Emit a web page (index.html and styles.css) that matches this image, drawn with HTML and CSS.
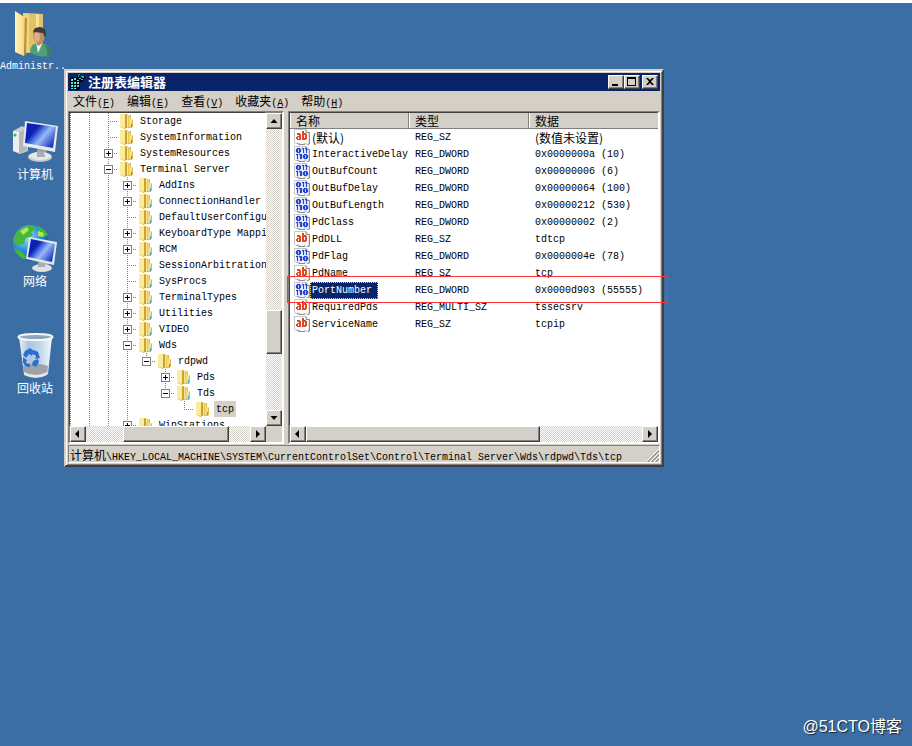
FILE: index.html
```html
<!DOCTYPE html>
<html lang="zh-CN">
<head>
<meta charset="utf-8">
<title>注册表编辑器</title>
<link rel="stylesheet" href="styles.css">
</head>
<body>
<svg class="defs" aria-hidden="true">
  <defs>
    <linearGradient id="gold" x1="0" x2="1"><stop offset="0" stop-color="#fff3a8"/><stop offset=".5" stop-color="#e6c95a"/><stop offset="1" stop-color="#f6e38a"/></linearGradient>
    <linearGradient id="cover" x1="0" x2="1"><stop offset="0" stop-color="#fff4bd"/><stop offset=".7" stop-color="#f7df8e"/><stop offset="1" stop-color="#dcb85a"/></linearGradient>
    <linearGradient id="screen" x1="0" y1="0" x2="1" y2=".7"><stop offset="0" stop-color="#0a1fc8"/><stop offset=".35" stop-color="#0d22b0"/><stop offset=".5" stop-color="#4a74e4"/><stop offset=".65" stop-color="#9ab8f6"/><stop offset="1" stop-color="#1c3cc0"/></linearGradient>
    <linearGradient id="glass" x1="0" x2="1"><stop offset="0" stop-color="#e8f1fa"/><stop offset=".3" stop-color="#a9c5e2"/><stop offset=".7" stop-color="#c8dbee"/><stop offset="1" stop-color="#f4f8fc"/></linearGradient>
    <radialGradient id="globe" cx=".35" cy=".3" r=".8"><stop offset="0" stop-color="#a9ecff"/><stop offset=".5" stop-color="#2b8fdd"/><stop offset="1" stop-color="#0a3f97"/></radialGradient>
    <symbol id="folder" viewBox="0 0 18 16">
      <path d="M2 1h7l1 1h3v4h1l1 1v7l-2 1H8l-1 1-5-2z" fill="#d9b94a"/>
      <path d="M2 1h5v14l-5-1z" fill="#fbeb9c"/>
      <path d="M7 2h2v13H7z" fill="#c9a23a"/>
      <path d="M9 2h3v12l-3 1z" fill="url(#gold)"/>
      <path d="M12 6h2v7l-2 1z" fill="#f5e07c"/>
      <path d="M13 11h1v3h-1z" fill="#3aa6d8"/>
    </symbol>
    <symbol id="page" viewBox="0 0 16 16">
      <path d="M.5 .5h11.500l3 3v11l-2 1-2-1.500-2 1.500H7l-2-1.500-3 .5-1.500-1z" fill="#fff" stroke="#c6c6c6"/>
      <path d="M12 .5v3h3.500M15.500 3.500v11.500l-2 .5M3 14l2 1.500h6" fill="none" stroke="#8b8b8b"/>
    </symbol>
    <symbol id="sz" viewBox="0 0 16 16">
      <use href="#page"/>
      <path d="M3 4h3v1h1v6H3v-1H2V8h1V7h2V6H3zM4 8v2h1V8zM8 2h2v2h2v1h1v5h-1v1H8zM10 6v3h1V6z" fill="#dc4a26" fill-rule="evenodd"/>
    </symbol>
    <symbol id="dword" viewBox="0 0 16 16">
      <use href="#page"/>
      <path d="M3 2h3v1h1v3H6v1H3V6H2V3h1zM4 3v3h1V3zM8 2h2v5H9V3H8zM11 2h2v5h-1V3h-1zM2 8h2v5H3V9H2zM5 8h3v5H6V9H5zM10 8h3v1h1v3h-1v1h-3v-1H9V9h1zM11 9v3h1V9z" fill="#2447d6" stroke="#2447d6" stroke-width=".3" fill-rule="evenodd"/>
    </symbol>
  </defs>
</svg>

<main class="desktop">
  <nav class="shortcuts" aria-label="桌面">
    <a class="shortcut" href="#">
      <svg viewBox="0 0 48 48" aria-hidden="true">
        <path d="M12 2l20 1v38l-18 1z" fill="#efd580"/>
        <path d="M18 3l14 0v30l-14 7z" fill="#e2c169"/>
        <path d="M25 3h3v36h-3z" fill="#f6e19a"/>
        <path d="M4 0l11 7-2 38-9-4z" fill="url(#cover)"/>
        <path d="M14 7h2l-1 36-2 2z" fill="#b98f3a"/>
        <path d="M19 42q0-9 7-10l5 1 4 0q5 3 6 11-9 4-22-2z" fill="#4f9f7b"/>
        <path d="M33 33q7 2 8 11l-5 1q1-7-3-12z" fill="#3b7f60"/>
        <path d="M25 31l2 11 4-9z" fill="#eef6f2"/>
        <path d="M24 29l3 6 5-3-1-5z" fill="#b9875a"/>
        <ellipse cx="28" cy="25" rx="6" ry="7" fill="#bf8f66"/>
        <ellipse cx="26" cy="26" rx="3" ry="5" fill="#dcb088"/>
        <path d="M22 22q0-6 7-6 6 1 6 7l-1 4-2-5-8-1z" fill="#3e3a38"/>
      </svg>
      <span class="mono">Administr..</span>
    </a>
    <a class="shortcut" href="#">
      <svg viewBox="0 0 48 48" aria-hidden="true">
        <path d="M2 13l9-5 6 3v22l-8 3-7-3z" fill="#c9ccd0"/>
        <path d="M2 13l6 1v21l-6-2z" fill="#eceef0"/>
        <path d="M8 14l8-3v21l-8 4z" fill="#b4b8bd"/>
        <circle cx="4" cy="17" r="1.500" fill="#24c33c"/>
        <path d="M26 31l9 1 1 6h-9z" fill="#9ca1a8"/>
        <ellipse cx="29" cy="39" rx="12" ry="5" fill="#c4c8cc"/>
        <ellipse cx="29" cy="38" rx="11" ry="4" fill="#e6e8ea"/>
        <path d="M26 33l7 1 1 5h-8z" fill="#a9aeb4"/>
        <path d="M14 3l33 5-3 26-32-6z" fill="#e8eaec"/>
        <path d="M16 5l29 4-3 21-28-5z" fill="url(#screen)"/>
      </svg>
      <span>计算机</span>
    </a>
    <a class="shortcut" href="#">
      <svg viewBox="0 0 48 48" aria-hidden="true">
        <circle cx="20" cy="18" r="18" fill="url(#globe)"/>
        <path d="M5 8Q11 1 21 0l4 4-5 3 2 4-7 2-2 6-7 1-4-4zM3 23l7 3 5 5-1 4Q5 31 3 23zM27 1q7 3 10 9l-4 2-5-4z" fill="#45b83b"/>
        <path d="M9 6l7-4 2 3-6 5zM27 6l6 2-1 4-5-1z" fill="#b7e45b"/>
        <path d="M28 36l9 1 1 4h-9z" fill="#9ca1a8"/>
        <ellipse cx="31" cy="43" rx="10" ry="4" fill="#dfe1e4"/>
        <path d="M27 37l7 1v4h-7z" fill="#a9aeb4"/>
        <path d="M18 12l28 5-3 23-28-6z" fill="#e2e5e9"/>
        <path d="M20 14l24 5-3 18-24-5z" fill="url(#screen)"/>
      </svg>
      <span>网络</span>
    </a>
    <a class="shortcut" href="#">
      <svg viewBox="0 0 48 48" aria-hidden="true">
        <path d="M8 5h33l-4 37q-12 6-24 0z" fill="url(#glass)"/>
        <path d="M12 34q12-5 25 0l-1 8q-11 6-23 0z" fill="#9da3a8"/>
        <path d="M13 40q12 6 23 0v3q-11 6-23 0z" fill="#e4e6e8"/>
        <ellipse cx="24.500" cy="5" rx="17" ry="3" fill="#8fa6bb" stroke="#f6f8fa" stroke-width="2"/>
        <path d="M14 19l5-3 4 3-2 5-3-2-3 4-3-3zM23 18l4 2 2 6-5 1 1-3-3-2zM12 25l4 3-1 3 4 1v3q-6 0-7-5zM22 29l5-2 1 3-3 5-4-2z" fill="#2c6fca"/>
      </svg>
      <span>回收站</span>
    </a>
  </nav>

  <section class="window" aria-label="注册表编辑器">
    <header class="titlebar">
      <svg class="app-icon" viewBox="0 0 16 16" aria-hidden="true">
        <path d="M1 5l3-2 5 1 2 2v9l-2 1H2l-1-1z" fill="#000"/>
        <path d="M2 5h2v2H2zM5 4h2v2H5zM8 6h2v1H8zM2 8h2v2H2zM5 8h2v2H5zM8 8h2v2H8zM2 11h2v2H2zM5 11h2v2H5zM8 11h2v2H8zM2 14h2v1H2zM5 14h2v1H5z" fill="#3ee6e6"/>
        <path d="M3 5h1v1H3zM6 8h1v1H6zM3 11h1v1H3zM6 14h1v1H6zM9 8h1v1H9z" fill="#fff"/>
        <path d="M8 1h3v3H8zM12 2h4v3h-4zM11 5h3v3h-3zM9 4h2v2H9z" fill="#000"/>
        <path d="M9 1h1v2H9zM12 2h3v1h-3zM10 4h2v1h-2zM12 5h2v1h-2zM13 3h2v1h-2zM10 0h1v1h-1z" fill="#2ab6b6"/>
      </svg>
      <h1>注册表编辑器</h1>
      <div class="controls">
        <button aria-label="最小化"><svg viewBox="0 0 12 10"><path d="M2 7h6v2H2z"/></svg></button>
        <button aria-label="最大化"><svg viewBox="0 0 12 10"><path d="M1 0h9v9H1zM2 2v6h7V2z" fill-rule="evenodd"/></svg></button>
        <button class="close" aria-label="关闭"><svg viewBox="0 0 12 10"><path d="M2 1h2l2 2 2-2h2L7 4.500 10 8H8L6 6 4 8H2l3-3.500z"/></svg></button>
      </div>
    </header>
    <div class="menubar">
      <button>文件<span class="mono">(<u>F</u>)</span></button>
      <button>编辑<span class="mono">(<u>E</u>)</span></button>
      <button>查看<span class="mono">(<u>V</u>)</span></button>
      <button>收藏夹<span class="mono">(<u>A</u>)</span></button>
      <button>帮助<span class="mono">(<u>H</u>)</span></button>
    </div>

    <div class="panes">
      <div class="pane tree-pane">
        <ul class="tree mono">
          <li><i class="v"></i><i class="v"></i><i class="v b"></i><svg><use href="#folder"/></svg><span>Storage</span></li>
          <li><i class="v"></i><i class="v"></i><i class="v b"></i><svg><use href="#folder"/></svg><span>SystemInformation</span></li>
          <li><i class="v"></i><i class="v"></i><i class="v b"><button class="plus" aria-label="展开"></button></i><svg><use href="#folder"/></svg><span>SystemResources</span></li>
          <li><i class="v"></i><i class="v"></i><i class="v b"><button aria-label="折叠"></button></i><svg><use href="#folder"/></svg><span>Terminal Server</span></li>
          <li><i class="v"></i><i class="v"></i><i class="v"></i><i class="v b"><button class="plus" aria-label="展开"></button></i><svg><use href="#folder"/></svg><span>AddIns</span></li>
          <li><i class="v"></i><i class="v"></i><i class="v"></i><i class="v b"><button class="plus" aria-label="展开"></button></i><svg><use href="#folder"/></svg><span>ConnectionHandler</span></li>
          <li><i class="v"></i><i class="v"></i><i class="v"></i><i class="v b"></i><svg><use href="#folder"/></svg><span>DefaultUserConfigu</span></li>
          <li><i class="v"></i><i class="v"></i><i class="v"></i><i class="v b"><button class="plus" aria-label="展开"></button></i><svg><use href="#folder"/></svg><span>KeyboardType Mappi</span></li>
          <li><i class="v"></i><i class="v"></i><i class="v"></i><i class="v b"><button class="plus" aria-label="展开"></button></i><svg><use href="#folder"/></svg><span>RCM</span></li>
          <li><i class="v"></i><i class="v"></i><i class="v"></i><i class="v b"></i><svg><use href="#folder"/></svg><span>SessionArbitration</span></li>
          <li><i class="v"></i><i class="v"></i><i class="v"></i><i class="v b"></i><svg><use href="#folder"/></svg><span>SysProcs</span></li>
          <li><i class="v"></i><i class="v"></i><i class="v"></i><i class="v b"><button class="plus" aria-label="展开"></button></i><svg><use href="#folder"/></svg><span>TerminalTypes</span></li>
          <li><i class="v"></i><i class="v"></i><i class="v"></i><i class="v b"><button class="plus" aria-label="展开"></button></i><svg><use href="#folder"/></svg><span>Utilities</span></li>
          <li><i class="v"></i><i class="v"></i><i class="v"></i><i class="v b"><button class="plus" aria-label="展开"></button></i><svg><use href="#folder"/></svg><span>VIDEO</span></li>
          <li><i class="v"></i><i class="v"></i><i class="v"></i><i class="v b"><button aria-label="折叠"></button></i><svg><use href="#folder"/></svg><span>Wds</span></li>
          <li><i class="v"></i><i class="v"></i><i class="v"></i><i class="v"></i><i class="end b"><button aria-label="折叠"></button></i><svg><use href="#folder"/></svg><span>rdpwd</span></li>
          <li><i class="v"></i><i class="v"></i><i class="v"></i><i class="v"></i><i></i><i class="v b"><button class="plus" aria-label="展开"></button></i><svg><use href="#folder"/></svg><span>Pds</span></li>
          <li><i class="v"></i><i class="v"></i><i class="v"></i><i class="v"></i><i></i><i class="end b"><button aria-label="折叠"></button></i><svg><use href="#folder"/></svg><span>Tds</span></li>
          <li><i class="v"></i><i class="v"></i><i class="v"></i><i class="v"></i><i></i><i></i><i class="end b"></i><svg><use href="#folder"/></svg><span class="current">tcp</span></li>
          <li><i class="v"></i><i class="v"></i><i class="v"></i><i class="v b"><button class="plus" aria-label="展开"></button></i><svg><use href="#folder"/></svg><span>WinStations</span></li>
        </ul>
        <div class="scroll vertical">
          <button aria-label="向上"><svg viewBox="0 0 12 12"><path d="M6 4L2.500 8h7z"/></svg></button>
          <div class="space before"></div><div class="thumb"></div><div class="space after"></div>
          <button aria-label="向下"><svg viewBox="0 0 12 12"><path d="M2.500 4h7L6 8z"/></svg></button>
        </div>
        <div class="scroll horizontal">
          <button aria-label="向左"><svg viewBox="0 0 12 12"><path d="M7 2v8L3 6z"/></svg></button>
          <div class="space before"></div><div class="thumb"></div><div class="space after"></div>
          <button aria-label="向右"><svg viewBox="0 0 12 12"><path d="M4 2v8l4-4z"/></svg></button>
        </div>
      </div>

      <div class="pane list-pane">
        <div class="values">
          <table>
            <colgroup><col class="c-name"><col class="c-type"><col></colgroup>
            <thead><tr><th>名称</th><th>类型</th><th>数据</th></tr></thead>
            <tbody class="mono">
              <tr><td><div class="name"><svg><use href="#sz"/></svg><span class="cjk">(默认)</span></div></td><td>REG_SZ</td><td class="cjk">(数值未设置)</td></tr>
              <tr><td><div class="name"><svg><use href="#dword"/></svg><span>InteractiveDelay</span></div></td><td>REG_DWORD</td><td>0x0000000a (10)</td></tr>
              <tr><td><div class="name"><svg><use href="#dword"/></svg><span>OutBufCount</span></div></td><td>REG_DWORD</td><td>0x00000006 (6)</td></tr>
              <tr><td><div class="name"><svg><use href="#dword"/></svg><span>OutBufDelay</span></div></td><td>REG_DWORD</td><td>0x00000064 (100)</td></tr>
              <tr><td><div class="name"><svg><use href="#dword"/></svg><span>OutBufLength</span></div></td><td>REG_DWORD</td><td>0x00000212 (530)</td></tr>
              <tr><td><div class="name"><svg><use href="#dword"/></svg><span>PdClass</span></div></td><td>REG_DWORD</td><td>0x00000002 (2)</td></tr>
              <tr><td><div class="name"><svg><use href="#sz"/></svg><span>PdDLL</span></div></td><td>REG_SZ</td><td>tdtcp</td></tr>
              <tr><td><div class="name"><svg><use href="#dword"/></svg><span>PdFlag</span></div></td><td>REG_DWORD</td><td>0x0000004e (78)</td></tr>
              <tr><td><div class="name"><svg><use href="#sz"/></svg><span>PdName</span></div></td><td>REG_SZ</td><td>tcp</td></tr>
              <tr><td><div class="name"><svg><use href="#dword"/></svg><span class="selected">PortNumber</span></div></td><td>REG_DWORD</td><td>0x0000d903 (55555)</td></tr>
              <tr><td><div class="name"><svg><use href="#sz"/></svg><span>RequiredPds</span></div></td><td>REG_MULTI_SZ</td><td>tssecsrv</td></tr>
              <tr><td><div class="name"><svg><use href="#sz"/></svg><span>ServiceName</span></div></td><td>REG_SZ</td><td>tcpip</td></tr>
            </tbody>
          </table>
        </div>
        <div class="scroll horizontal">
          <button aria-label="向左"><svg viewBox="0 0 12 12"><path d="M7 2v8L3 6z"/></svg></button>
          <div class="thumb"></div><div class="space"></div>
          <button aria-label="向右"><svg viewBox="0 0 12 12"><path d="M4 2v8l4-4z"/></svg></button>
        </div>
        <div class="highlight"></div>
      </div>
    </div>

    <footer class="status">
      <span class="path">计算机<span class="mono">\HKEY_LOCAL_MACHINE\SYSTEM\CurrentControlSet\Control\Terminal Server\Wds\rdpwd\Tds\tcp</span></span>
      <svg class="grip" viewBox="0 0 13 13" aria-hidden="true"><path d="M0 13L13 0M4 13l9-9M8 13l5-5" stroke="#fff" stroke-width="1"/><path d="M1 13L13 1M2 13L13 2M5 13l8-8M6 13l7-7M9 13l4-4M10 13l3-3" stroke="#808080" stroke-width=".7"/></svg>
    </footer>
  </section>
  <p class="credit">@51CTO博客</p>
</main>
</body>
</html>
```
FILE: styles.css
```css
:root {
  --face: #d4d0c8;
  --desk: #3a6ea5;
  --navy: #0a246a;
  --shade: #808080;
  --dark: #404040;
  --cjk: "Noto Sans CJK SC", sans-serif;
  --dither: repeating-conic-gradient(#d4d0c8 0 25%, #fff 0 50%) 0 0 / 2px 2px;
}

* { box-sizing: border-box; }

body {
  margin: 0;
  background: var(--desk);
  color: #000;
  font: 12px/16px var(--cjk);
}

button {
  margin: 0;
  padding: 0;
  border: 0;
  color: inherit;
  font: inherit;
}

svg { display: block; }
.defs { position: absolute; width: 0; height: 0; }
.mono { font-family: "Liberation Mono", monospace; font-size: 10px; }
.cjk { font-family: var(--cjk); font-size: 12px; }

/* Desktop */
.desktop {
  position: relative;
  display: flex;
  align-items: flex-start;
  min-height: 100vh;
  border-top: 3px solid #fff;
}

.shortcuts {
  display: flex;
  flex: 0 0 64px;
  flex-direction: column;
  gap: 40px;
  min-width: 0;
  padding-top: 8px;
}

.shortcut {
  display: flex;
  flex-direction: column;
  align-items: center;
  width: 70px;
  height: 67px;
  color: #fff;
  text-decoration: none;
}

.shortcut svg { width: 48px; height: 48px; }
.shortcut .mono { align-self: flex-start; }

.credit {
  position: absolute;
  right: 10px;
  bottom: 8px;
  margin: 0;
  color: #fff;
  font: 16px/22px "Liberation Sans", var(--cjk);
  text-shadow: 1px 1px 1px #222;
}

/* Window frame */
.window {
  flex: 0 1 600px;
  min-width: 0;
  margin-top: 66px;
  padding: 2px;
  border: 2px solid;
  border-color: var(--face) var(--dark) var(--dark) var(--face);
  background: var(--face);
  box-shadow: inset 1px 1px #fff, inset -1px -1px var(--shade);
}

.titlebar {
  display: flex;
  align-items: center;
  gap: 3px;
  height: 18px;
  padding: 0 2px 0 1px;
  background: var(--navy);
  color: #fff;
}

.app-icon { width: 16px; height: 16px; }
.titlebar h1 { flex: 1; margin: 0; font-size: 13px; line-height: 18px; }
.controls { display: flex; }
.controls .close { margin-left: 2px; }
.controls button { width: 16px; height: 14px; }
.controls svg { width: 12px; height: 10px; }

.controls button,
.scroll button,
.thumb {
  display: grid;
  flex: none;
  place-items: center;
  border: 1px solid;
  border-color: #fff var(--dark) var(--dark) #fff;
  background: var(--face);
  box-shadow: inset -1px -1px var(--shade);
}

.menubar { display: flex; gap: 12px; height: 20px; padding: 0 5px; }
.menubar button { background: none; line-height: 20px; white-space: nowrap; }

/* Panes */
.panes { display: grid; grid-template-columns: 216px minmax(0, 1fr); gap: 4px; }

.pane {
  display: grid;
  grid-template-rows: 313px 16px;
  border: 2px solid;
  border-color: var(--shade) #fff #fff var(--shade);
  background: var(--face);
}

.tree-pane { grid-template-columns: minmax(0, 1fr) 16px; }
.list-pane { position: relative; grid-template-columns: minmax(0, 1fr); }

.tree,
.values {
  overflow: hidden;
  background: #fff;
  box-shadow: -1px -1px var(--dark);
}

.tree { margin: 0; padding: 0; list-style: none; }
.tree li { display: flex; height: 16px; margin-left: -9px; white-space: nowrap; }

.tree i {
  --col: repeating-linear-gradient(#808080 0 1px, transparent 1px 2px) 9px 0;
  --row: repeating-linear-gradient(90deg, #808080 0 1px, transparent 1px 2px) 9px 8px / 10px 1px no-repeat;
  flex: 0 0 19px;
  padding: 4px 5px;
}

.tree .v { background: var(--col) / 1px 16px no-repeat; }
.tree .v.b { background: var(--col) / 1px 16px no-repeat, var(--row); }
.tree .end { background: var(--col) / 1px 8px no-repeat, var(--row); }

.tree button {
  --bar: linear-gradient(#000, #000) 1px 3px / 5px 1px no-repeat;
  display: block;
  width: 9px;
  height: 9px;
  border: 1px solid var(--shade);
  background: var(--bar) padding-box, #fff;
}

.tree .plus { background: linear-gradient(#000, #000) 3px 1px / 1px 5px no-repeat padding-box, var(--bar) padding-box, #fff; }
.tree svg { flex: none; width: 18px; height: 16px; margin-right: 2px; }
.tree span { height: 16px; padding: 0 2px; line-height: 18px; }
.tree .current { background: var(--face); }

/* Scroll bars */
.scroll { display: flex; }
.scroll button { width: 16px; height: 16px; }
.scroll svg { width: 12px; height: 12px; }
.scroll .space { flex: 1; background: var(--dither); }
.vertical { flex-direction: column; }
.vertical .thumb { height: 44px; }
.vertical .before { flex: 181; }
.vertical .after { flex: 56; }
.tree-pane .horizontal .thumb { width: 106px; }
.tree-pane .horizontal .before { flex: 37; }
.tree-pane .horizontal .after { flex: 21; }
.list-pane .thumb { flex: 0 1 234px; }

/* Value list */
table { width: 100%; border-collapse: separate; border-spacing: 0; table-layout: fixed; }
.c-name { width: 119px; }
.c-type { width: 120px; }

th {
  height: 16px;
  padding: 0 6px;
  border-right: 1px solid var(--shade);
  border-bottom: 1px solid var(--shade);
  background: var(--face);
  box-shadow: inset 1px 0 #fff;
  font-weight: normal;
  line-height: 15px;
  text-align: left;
}

th:last-child { border-right: 0; }
td { height: 17px; padding: 0 0 0 6px; line-height: 17px; white-space: nowrap; }
td:first-child { padding-left: 4px; }
.name { display: flex; height: 17px; }
.name svg { flex: none; width: 16px; height: 16px; }
.name span { padding: 0 5px 0 1px; border: 1px solid transparent; line-height: 15px; }
.name .selected { border: 1px dotted #e8d27a; background: var(--navy); color: #fff; }

/* Callout frame, drawn over one row and past the pane's edge */
.highlight {
  position: absolute;
  top: 163px;
  right: -10px;
  left: -3px;
  height: 27px;
  border: 1px solid #f33;
}

/* Status bar */
.status {
  display: flex;
  justify-content: space-between;
  align-items: flex-end;
  height: 18px;
  margin-top: 1px;
  padding-left: 1px;
  border: 1px solid;
  border-color: var(--shade) #fff #fff var(--shade);
  white-space: nowrap;
}

.path { align-self: flex-start; line-height: 18px; }
.grip { flex: none; width: 13px; height: 13px; }
```
